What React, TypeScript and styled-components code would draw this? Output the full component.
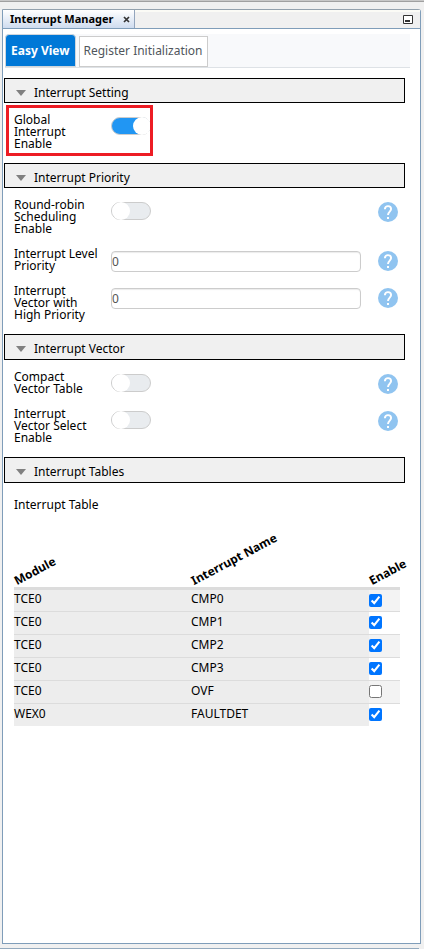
import React, { useId, useState } from "react";
import styled, { createGlobalStyle, css } from "styled-components";

const GlobalStyle = createGlobalStyle`
  *, *::before, *::after { box-sizing: border-box; }
  body {
    margin: 0;
    background: #f0f0f0;
    color: #000;
    font: 12px/18px "Noto Sans", "Open Sans", sans-serif;
  }
  button, input { font: inherit; color: inherit; margin: 0; }
`;

const Workbench = styled.div`
  display: flex;
  flex-direction: column;
  min-height: 100vh;
  border-top: 1px solid #c8c8c8;
  box-shadow: inset 0 1px #a0a0a0;
  padding: 8px 3px 0 2px;
`;

const Panel = styled.main`
  flex: 1;
  display: flex;
  flex-direction: column;
  border: 1px solid #7f9db9;
  border-top-color: #93a1ad;
  border-radius: 0 3px 0 0;
  background: #fff;
`;

const TitleBar = styled.header`
  display: flex;
  align-items: center;
  justify-content: space-between;
  height: 19px;
  padding-right: 7px;
  border-bottom: 1px solid #7f9db9;
  background: #f0f0f0;
  box-shadow: inset 0 2px #fbfbf6;
`;

const PartTab = styled.div`
  display: flex;
  align-items: center;
  gap: 10px;
  height: 18px;
  padding: 0 4px 0 7px;
  border-right: 1px solid #93a5bd;
  background: linear-gradient(#fff, #cfdcef);
`;

const PartTitle = styled.h1`
  margin: 0;
  font: bold 11px/16px "Noto Sans", sans-serif;
`;

const IconButton = styled.button`
  display: flex;
  padding: 0;
  border: 0;
  background: none;
`;

const Content = styled.div`
  flex: 1;
  padding: 5px 15px 16px 1px;
`;

const TabList = styled.nav`
  display: flex;
  align-items: flex-end;
  gap: 3px;
  height: 34px;
  margin: 0 -5px 10px 1px;
  border-bottom: 1px solid #dee2e6;
  background: #f8f9fb;
`;

const ViewTab = styled.button<{ $active?: boolean }>`
  height: 31px;
  padding: 0 4px 2px;
  border: 1px solid #ccc;
  background: #fff;
  color: #50565c;
  line-height: 26px;
  white-space: nowrap;
  ${(p) =>
    p.$active &&
    css`
      height: 33px;
      padding: 0 5px;
      border-color: #cfd6dc;
      border-radius: 4px 4px 0 0;
      background: #0078d7;
      color: #fff;
      font-weight: bold;
    `}
`;

const SectionHeader = styled.h2<{ $tall?: boolean }>`
  margin: 0;
  border: 1px solid #000;
  background: #f0f0f0;
  font: inherit;
  height: ${(p) => (p.$tall ? 26 : 25)}px;
`;

const SectionToggle = styled.button`
  display: flex;
  align-items: center;
  gap: 7px;
  width: 100%;
  height: 100%;
  padding: 4px 0 0 10px;
  border: 0;
  background: none;
  text-align: left;
`;

const Fields = styled.div`
  display: flex;
  flex-direction: column;
  gap: 13px;
  padding: 11px 7px 13px 10px;
`;

const FieldRow = styled.div`
  position: relative;
  display: grid;
  grid-template-columns: 88px minmax(0, 1fr) 20px;
  align-items: start;
`;

const FieldLabel = styled.label`
  line-height: 12px;
`;

const Control = styled.div`
  display: flex;
  padding: 3px 17px 0 9px;
`;

const Switch = styled.input`
  appearance: none;
  position: relative;
  width: 40px;
  height: 18px;
  border: 1px solid #ccc;
  border-radius: 9px;
  background: #e9ecef;
  &::before {
    content: "";
    position: absolute;
    top: -1px;
    left: 0;
    width: 18px;
    height: 18px;
    border-radius: 50%;
    background: #fff;
  }
  &:checked { background: #2196f3; }
  &:checked::before { left: 21px; }
`;

const TextBox = styled.input`
  width: 100%;
  height: 21px;
  padding: 0;
  border: 1px solid #ccc;
  border-radius: 4px;
  background: #fff;
  box-shadow: inset 0 1px 1px rgba(0, 0, 0, 0.08);
  color: #555;
`;

const HelpButton = styled(IconButton)`
  margin-top: 3px;
`;

const Highlight = styled.div`
  position: absolute;
  inset: -9px auto -6px -8px;
  width: 147px;
  border: 3px solid #ed1c24;
  pointer-events: none;
`;

const TableArea = styled.div`
  padding: 13px 5px 0 10px;
`;

const Table = styled.table`
  width: 100%;
  border-collapse: collapse;
  table-layout: fixed;
`;

const Caption = styled.caption`
  text-align: left;
`;

const HeadCell = styled.th<{ $width?: number }>`
  ${(p) => p.$width && `width: ${p.$width}px;`}
  height: 74px;
  padding: 0 0 0 4px;
  border-bottom: 3px solid #dcdcdc;
  text-align: left;
  vertical-align: bottom;
`;

const Slanted = styled.span`
  display: block;
  width: max-content;
  line-height: 12px;
  white-space: nowrap;
  transform: rotate(-28deg);
  transform-origin: left bottom;
`;

const Row = styled.tr`
  height: 23px;
  border-bottom: 1px solid #dcdcdc;
  &:nth-child(odd) { background: #f3f3f3; }
  &:last-child { border-bottom: 0; background: #fff; }
`;

const Cell = styled.td`
  padding: 0 0 2px;
  background: #ededed;
`;

const CheckCell = styled.td`
  padding: 0;
`;

const Check = styled.input`
  display: block;
  width: 13px;
  height: 13px;
  accent-color: #0075ff;
`;

const StatusEdge = styled.div`
  height: 5px;
  margin: 0 2px 0 -2px;
  border-bottom: 1px solid #93a9bd;
`;

const Triangle = () => (
  <svg width="12" height="8" viewBox="0 0 12 8" aria-hidden="true">
    <path d="M1 1h10L6 7z" fill="#808080" />
  </svg>
);

const HelpIcon = () => (
  <svg width="20" height="20" viewBox="0 0 20 20" aria-hidden="true">
    <circle cx="10" cy="10" r="10" fill="#90c4f0" />
    <path
      d="M6.9 7.2C6.9 5.2 8.2 4.1 10 4.1s3.1 1.2 3.1 3c0 2.4-3.1 2.7-3.1 5.9"
      fill="none"
      stroke="#fff"
      strokeWidth="1.9"
    />
    <path d="M9 15h2v2H9z" fill="#fff" />
  </svg>
);

function Help({ topic }: { topic: string }) {
  return (
    <HelpButton type="button" aria-label={`Help: ${topic}`}>
      <HelpIcon />
    </HelpButton>
  );
}

type FieldProps = {
  label: string;
  kind: "switch" | "text";
  on?: boolean;
  help?: boolean;
  highlighted?: boolean;
};

function Field({ label, kind, on, help = true, highlighted }: FieldProps) {
  const id = useId();
  return (
    <FieldRow>
      <FieldLabel htmlFor={id}>{label}</FieldLabel>
      <Control>
        {kind === "switch" ? (
          <Switch id={id} type="checkbox" role="switch" defaultChecked={on} />
        ) : (
          <TextBox id={id} type="text" defaultValue="0" />
        )}
      </Control>
      {help && <Help topic={label} />}
      {highlighted && <Highlight />}
    </FieldRow>
  );
}

type SectionProps = { title: string; tall?: boolean; children: React.ReactNode };

function Section({ title, tall, children }: SectionProps) {
  const [open, setOpen] = useState(true);
  return (
    <section>
      <SectionHeader $tall={tall}>
        <SectionToggle type="button" aria-expanded={open} onClick={() => setOpen(!open)}>
          <Triangle />
          {title}
        </SectionToggle>
      </SectionHeader>
      {open && children}
    </section>
  );
}

const interrupts = [
  { module: "TCE0", name: "CMP0", enabled: true },
  { module: "TCE0", name: "CMP1", enabled: true },
  { module: "TCE0", name: "CMP2", enabled: true },
  { module: "TCE0", name: "CMP3", enabled: true },
  { module: "TCE0", name: "OVF", enabled: false },
  { module: "WEX0", name: "FAULTDET", enabled: true },
];

export default function App() {
  return (
    <>
      <GlobalStyle />
      <Workbench>
        <Panel>
          <TitleBar>
            <PartTab>
              <PartTitle>Interrupt Manager</PartTitle>
              <IconButton type="button" aria-label="Close">
                <svg width="7" height="7" viewBox="0 0 7 7">
                  <path d="M1 1l5 5M6 1L1 6" stroke="#333" strokeWidth="1.7" />
                </svg>
              </IconButton>
            </PartTab>
            <IconButton type="button" aria-label="Minimize">
              <svg width="10" height="9" viewBox="0 0 10 9">
                <path d="M.5.5h9v8h-9z" fill="#fff" stroke="#333" />
                <path d="M2 5h5v2H2z" fill="#333" />
              </svg>
            </IconButton>
          </TitleBar>
          <Content>
            <TabList>
              <ViewTab type="button" $active>
                Easy View
              </ViewTab>
              <ViewTab type="button">Register Initialization</ViewTab>
            </TabList>
            <Section title="Interrupt Setting">
              <Fields>
                <Field label="Global Interrupt Enable" kind="switch" on help={false} highlighted />
              </Fields>
            </Section>
            <Section title="Interrupt Priority">
              <Fields>
                <Field label="Round-robin Scheduling Enable" kind="switch" />
                <Field label="Interrupt Level Priority" kind="text" />
                <Field label="Interrupt Vector with High Priority" kind="text" />
              </Fields>
            </Section>
            <Section title="Interrupt Vector" tall>
              <Fields>
                <Field label="Compact Vector Table" kind="switch" />
                <Field label="Interrupt Vector Select Enable" kind="switch" />
              </Fields>
            </Section>
            <Section title="Interrupt Tables" tall>
              <TableArea>
                <Table>
                  <Caption>Interrupt Table</Caption>
                  <thead>
                    <tr>
                      <HeadCell $width={177} scope="col">
                        <Slanted>Module</Slanted>
                      </HeadCell>
                      <HeadCell scope="col">
                        <Slanted>Interrupt Name</Slanted>
                      </HeadCell>
                      <HeadCell $width={31} scope="col">
                        <Slanted>Enable</Slanted>
                      </HeadCell>
                    </tr>
                  </thead>
                  <tbody>
                    {interrupts.map((row) => (
                      <Row key={row.module + row.name}>
                        <Cell>{row.module}</Cell>
                        <Cell>{row.name}</Cell>
                        <CheckCell>
                          <Check
                            type="checkbox"
                            aria-label={`Enable ${row.module} ${row.name}`}
                            defaultChecked={row.enabled}
                          />
                        </CheckCell>
                      </Row>
                    ))}
                  </tbody>
                </Table>
              </TableArea>
            </Section>
          </Content>
        </Panel>
        <StatusEdge />
      </Workbench>
    </>
  );
}
